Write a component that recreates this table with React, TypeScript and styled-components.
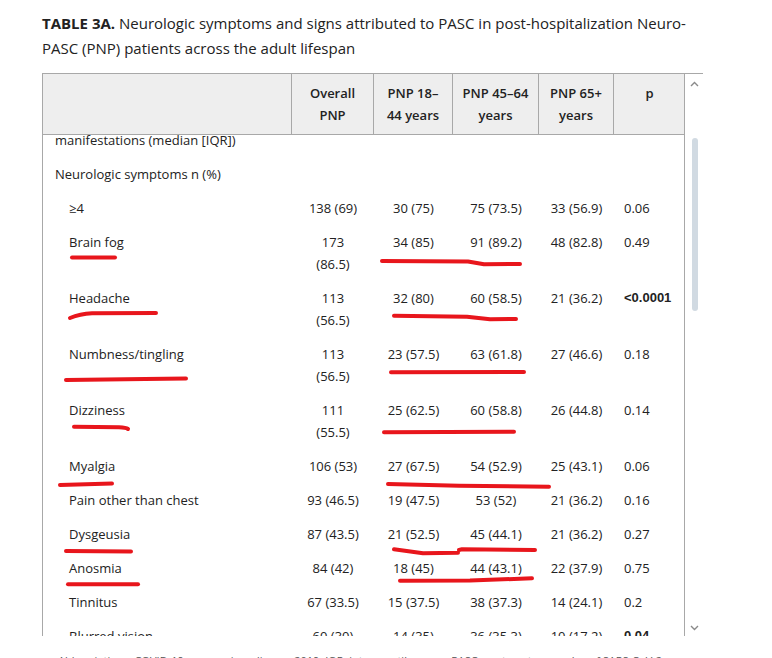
import React from 'react';
import styled, { createGlobalStyle } from 'styled-components';

const GlobalStyle = createGlobalStyle`
  html, body {
    margin: 0;
    padding: 0;
    background: #ffffff;
    overflow: hidden;
  }
  * {
    box-sizing: border-box;
  }
`;

const COLUMNS = '249px 82px 79px 86px 75px 71px';

const Page = styled.div({
  padding: '11px 0 0 42px',
  width: '772px',
  fontFamily: '"Open Sans", "Noto Sans", sans-serif',
  color: '#222222',
});

const Caption = styled.p({
  margin: '0 0 13px',
  fontSize: '15px',
  lineHeight: '24.5px',
  color: '#222222',
});

const CaptionLabel = styled.strong({
  fontWeight: 700,
});

const Frame = styled.div({
  position: 'relative',
  display: 'flex',
  width: '661px',
  borderTop: '1px solid #a8a8a8',
});

const ScrollArea = styled.div({
  width: '643px',
  height: '562px',
  borderLeft: '1px solid #a8a8a8',
  borderRight: '1px solid #a8a8a8',
  overflow: 'hidden',
  display: 'flex',
  flexDirection: 'column',
});

const HeaderRow = styled.div({
  display: 'grid',
  gridTemplateColumns: COLUMNS,
  background: '#eeeeee',
  borderBottom: '1px solid #a8a8a8',
  flexShrink: 0,
});

const HeaderCell = styled.div({
  padding: '8px 4px',
  fontSize: '13px',
  lineHeight: '22px',
  fontWeight: 600,
  color: '#222222',
  textAlign: 'center',
  borderRight: '1px solid #a8a8a8',
  '&:last-child': {
    borderRight: 'none',
  },
});

const Body = styled.div({
  flex: 1,
  overflow: 'hidden',
});

const BodyInner = styled.div({
  marginTop: '-12px',
});

const Row = styled.div({
  display: 'grid',
  gridTemplateColumns: COLUMNS,
  fontSize: '13px',
  lineHeight: '22px',
  color: '#222222',
});

const LabelCell = styled.div<{ $indent?: boolean }>((props) => ({
  padding: props.$indent ? '6px 8px 6px 26px' : '6px 8px 6px 12px',
}));

const ValueCell = styled.div<{ $bold?: boolean; $left?: boolean }>((props) => ({
  padding: props.$left ? '6px 4px 6px 10px' : '6px 2px',
  textAlign: props.$left ? 'left' : 'center',
  fontWeight: props.$bold ? 700 : 400,
  fontFamily: props.$bold ? '"Liberation Sans", Arial, sans-serif' : 'inherit',
}));

const Scrollbar = styled.div({
  width: '18px',
  height: '562px',
  display: 'flex',
  flexDirection: 'column',
  alignItems: 'center',
});

const Arrow = styled.div<{ $edge: 'top' | 'bottom' }>((props) => ({
  height: '14px',
  display: 'flex',
  alignItems: 'center',
  justifyContent: 'center',
  color: '#8a8a8a',
  marginTop: props.$edge === 'top' ? '3px' : 0,
  marginBottom: props.$edge === 'bottom' ? '1px' : 0,
}));

const TrackSpace = styled.div({
  flex: 1,
  width: '100%',
  display: 'flex',
  flexDirection: 'column',
  alignItems: 'center',
  paddingTop: '47px',
});

const Thumb = styled.div({
  width: '6px',
  height: '173px',
  borderRadius: '3px',
  background: '#d1dae2',
  marginLeft: '2px',
});

const Annotations = styled.svg({
  position: 'absolute',
  left: 0,
  top: 0,
  width: '772px',
  height: '658px',
  pointerEvents: 'none',
});

const Footnote = styled.p({
  margin: '16px 0 0 16px',
  width: '610px',
  fontSize: '11px',
  lineHeight: '18px',
  color: '#555555',
});

type Value = string | [string, string];

interface RowData {
  label: string;
  indent?: boolean;
  values?: Value[];
  p?: string;
  bold?: boolean;
}

const rows: RowData[] = [
  { label: 'manifestations (median [IQR])' },
  { label: 'Neurologic symptoms n (%)' },
  { label: '≥4', indent: true, values: ['138 (69)', '30 (75)', '75 (73.5)', '33 (56.9)'], p: '0.06' },
  { label: 'Brain fog', indent: true, values: [['173', '(86.5)'], '34 (85)', '91 (89.2)', '48 (82.8)'], p: '0.49' },
  { label: 'Headache', indent: true, values: [['113', '(56.5)'], '32 (80)', '60 (58.5)', '21 (36.2)'], p: '<0.0001', bold: true },
  { label: 'Numbness/tingling', indent: true, values: [['113', '(56.5)'], '23 (57.5)', '63 (61.8)', '27 (46.6)'], p: '0.18' },
  { label: 'Dizziness', indent: true, values: [['111', '(55.5)'], '25 (62.5)', '60 (58.8)', '26 (44.8)'], p: '0.14' },
  { label: 'Myalgia', indent: true, values: ['106 (53)', '27 (67.5)', '54 (52.9)', '25 (43.1)'], p: '0.06' },
  { label: 'Pain other than chest', indent: true, values: ['93 (46.5)', '19 (47.5)', '53 (52)', '21 (36.2)'], p: '0.16' },
  { label: 'Dysgeusia', indent: true, values: ['87 (43.5)', '21 (52.5)', '45 (44.1)', '21 (36.2)'], p: '0.27' },
  { label: 'Anosmia', indent: true, values: ['84 (42)', '18 (45)', '44 (43.1)', '22 (37.9)'], p: '0.75' },
  { label: 'Tinnitus', indent: true, values: ['67 (33.5)', '15 (37.5)', '38 (37.3)', '14 (24.1)'], p: '0.2' },
  { label: 'Blurred vision', indent: true, values: ['60 (30)', '14 (35)', '36 (35.3)', '10 (17.2)'], p: '0.04', bold: true },
];

// hand-drawn red marks, in page coordinates
const marks: string[] = [
  'M72 257.5 L115 257.5',
  'M382 261 L468 261.5 L484 264.3 L520 264',
  'M70 318 Q80 314 92 313.3 L156 313',
  'M394 315.7 L467 316.7 L490 319.3 L516 319',
  'M66 380 L145 379 L186 378.5',
  'M391 372.3 L524 372',
  'M74 426.7 L119 427.3 Q126 427.6 128 429',
  'M384 432.3 L514 431.7',
  'M60 485 L112 483.5',
  'M388 484 L459 485.7 L549 486.7',
  'M66 551 L131 551.5',
  'M394 549.3 L423 553.3 L458 552.7 M459 550 L462 549.3 L535 550',
  'M68 584.3 L138 584.3',
  'M400 580.7 L470 580.5 L532 578.3',
];

function ChevronUp() {
  return (
    <svg width="9" height="6" viewBox="0 0 9 6">
      <path d="M1 5 L4.5 1.5 L8 5" fill="none" stroke="currentColor" strokeWidth="1.4" />
    </svg>
  );
}

function ChevronDown() {
  return (
    <svg width="9" height="6" viewBox="0 0 9 6">
      <path d="M1 1 L4.5 4.5 L8 1" fill="none" stroke="currentColor" strokeWidth="1.4" />
    </svg>
  );
}

function renderValue(v: Value) {
  if (Array.isArray(v)) {
    return (
      <>
        {v[0]}
        <br />
        {v[1]}
      </>
    );
  }
  return v;
}

export default function App() {
  return (
    <>
      <GlobalStyle />
      <Page>
        <Caption>
          <CaptionLabel>TABLE 3A.</CaptionLabel> Neurologic symptoms and signs attributed to PASC in
          post-hospitalization Neuro-
          <br />
          PASC (PNP) patients across the adult lifespan
        </Caption>
        <Frame>
          <ScrollArea>
            <HeaderRow>
              <HeaderCell />
              <HeaderCell>
                Overall
                <br />
                PNP
              </HeaderCell>
              <HeaderCell>
                PNP 18–
                <br />
                44 years
              </HeaderCell>
              <HeaderCell>
                PNP 45–64
                <br />
                years
              </HeaderCell>
              <HeaderCell>
                PNP 65+
                <br />
                years
              </HeaderCell>
              <HeaderCell>p</HeaderCell>
            </HeaderRow>
            <Body>
              <BodyInner>
                {rows.map((r) => (
                  <Row key={r.label}>
                    <LabelCell $indent={r.indent}>{r.label}</LabelCell>
                    {(r.values ?? ['', '', '', '']).map((v, i) => (
                      <ValueCell key={i}>{renderValue(v)}</ValueCell>
                    ))}
                    <ValueCell $left $bold={r.bold}>
                      {r.p ?? ''}
                    </ValueCell>
                  </Row>
                ))}
              </BodyInner>
            </Body>
          </ScrollArea>
          <Scrollbar>
            <Arrow $edge="top">
              <ChevronUp />
            </Arrow>
            <TrackSpace>
              <Thumb />
            </TrackSpace>
            <Arrow $edge="bottom">
              <ChevronDown />
            </Arrow>
          </Scrollbar>
        </Frame>
        <Footnote>
          Abbreviations: COVID-19, coronavirus disease 2019; IQR, interquartile range; PASC, post-acute sequelae of
          SARS-CoV-2 infection.
        </Footnote>
      </Page>
      <Annotations viewBox="0 0 772 658">
        {marks.map((d, i) => (
          <path
            key={i}
            d={d}
            fill="none"
            stroke="#e8161c"
            strokeWidth="4"
            strokeLinecap="round"
            strokeLinejoin="round"
          />
        ))}
      </Annotations>
    </>
  );
}
